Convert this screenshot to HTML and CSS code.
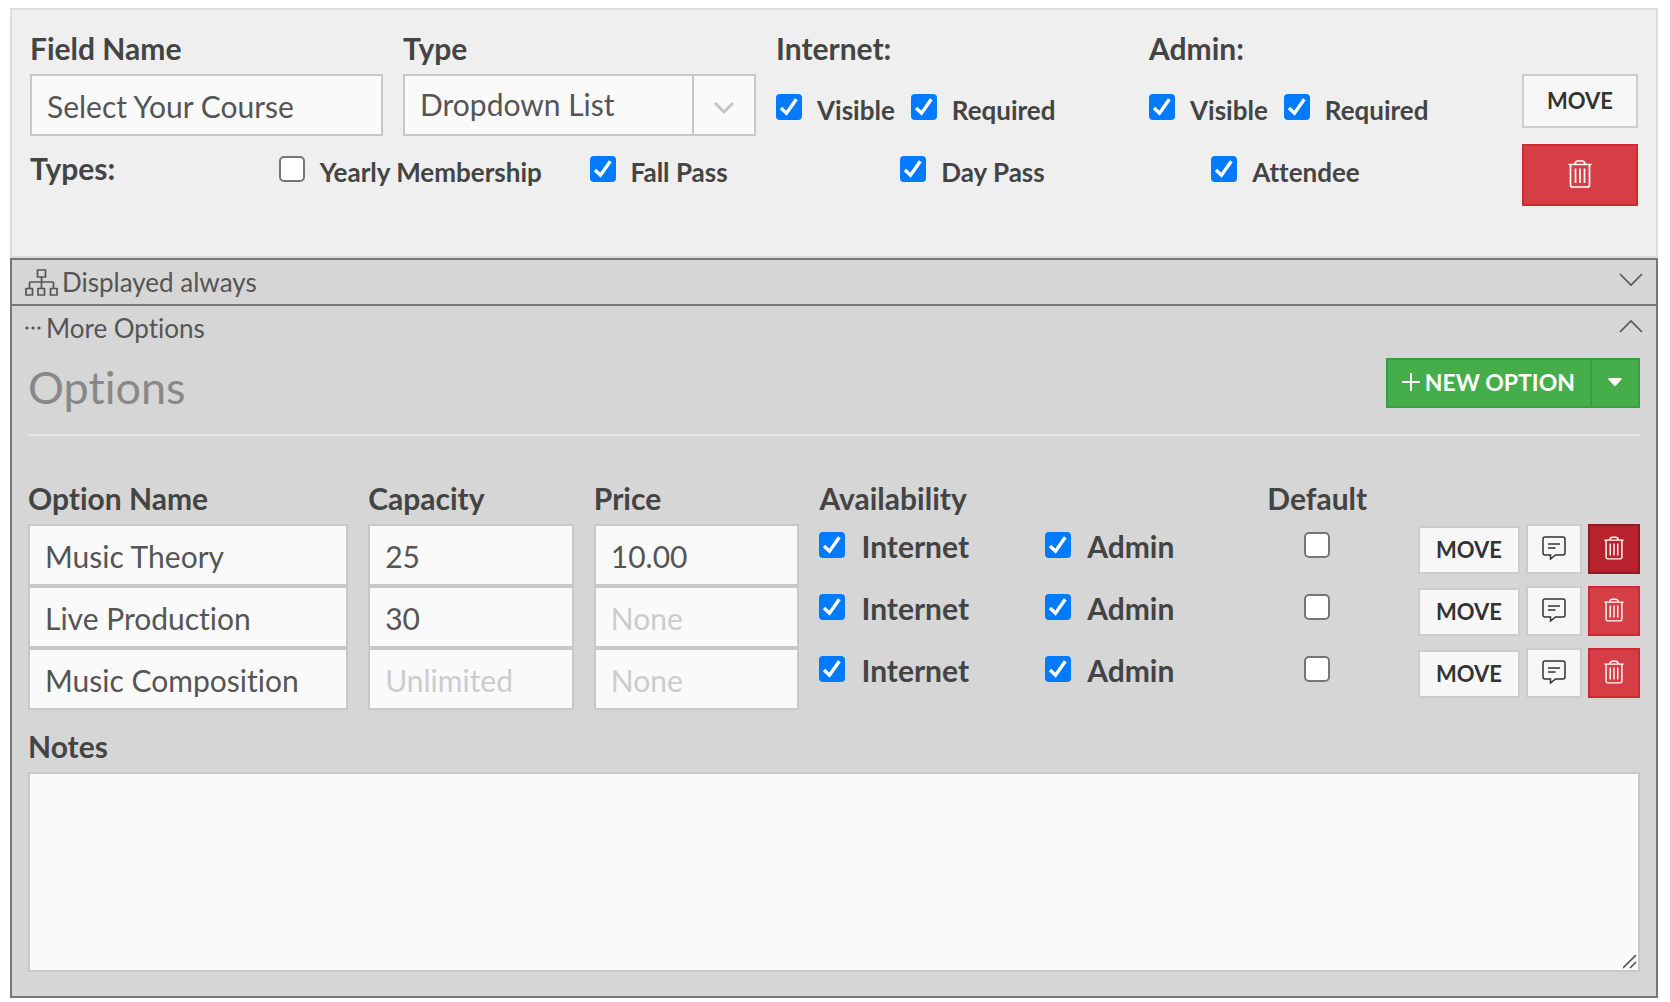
FILE: index.html
```
<!DOCTYPE html>
<html lang="en">
<head>
    <meta charset="UTF-8">
    <meta name="viewport" content="width=device-width, initial-scale=1.0">
    <title>Field Settings</title>
    <link rel="stylesheet" href="styles.css">
</head>
<body>
    <!-- shared icons -->
    <svg class="sprite" width="0" height="0" aria-hidden="true">
        <symbol id="trash" viewBox="0 0 24 28">
            <path d="M0.5 4.5H23.5M7 4.5C7 2.5 8 1 10 1H14C16 1 17 2.5 17 4.5M2.5 4.5V25Q2.5 27 4.5 27H19.5Q21.5 27 21.5 25V4.5M7.5 8.5V23M12 8.5V23M16.5 8.5V23" fill="none" stroke="currentColor" stroke-width="1.7"/>
        </symbol>
        <symbol id="comment" viewBox="0 0 24 24">
            <path d="M3 1H21Q23 1 23 3V17Q23 19 21 19H13.5L8.5 23V19H3Q1 19 1 17V3Q1 1 3 1Z M6 8H18M6 12H13.5" fill="none" stroke="currentColor" stroke-width="1.5"/>
        </symbol>
    </svg>

    <section class="field-panel">
        <div class="field-main">
            <div class="field-row">
                <div class="field-col">
                    <label class="title" for="fieldName">Field Name</label>
                    <input class="text-input" type="text" id="fieldName" value="Select Your Course">
                </div>
                <div class="field-col">
                    <label class="title" for="fieldType">Type</label>
                    <select class="select-input" id="fieldType">
                        <option>Dropdown List</option>
                    </select>
                </div>
                <div class="field-col">
                    <span class="title">Internet:</span>
                    <div class="checks">
                        <label class="check"><input type="checkbox" checked><span>Visible</span></label>
                        <label class="check"><input type="checkbox" checked><span>Required</span></label>
                    </div>
                </div>
                <div class="field-col">
                    <span class="title">Admin:</span>
                    <div class="checks">
                        <label class="check"><input type="checkbox" checked><span>Visible</span></label>
                        <label class="check"><input type="checkbox" checked><span>Required</span></label>
                    </div>
                </div>
            </div>
            <div class="types-row">
                <span class="title">Types:</span>
                <label class="check"><input type="checkbox"><span>Yearly Membership</span></label>
                <label class="check"><input type="checkbox" checked><span>Fall Pass</span></label>
                <label class="check"><input type="checkbox" checked><span>Day Pass</span></label>
                <label class="check"><input type="checkbox" checked><span>Attendee</span></label>
            </div>
        </div>
        <div class="field-actions">
            <button class="btn move-btn" type="button">MOVE</button>
            <button class="btn delete-btn" type="button" aria-label="Delete field"><svg class="trash-lg"><use href="#trash"/></svg></button>
        </div>
    </section>

    <section class="settings">
        <button class="bar bar-line" type="button">
            <svg class="sitemap" viewBox="0 0 33 27"><path d="M12.5 1H20.5V8H12.5ZM1 19.5H7.5V26H1ZM13 19.5H19.5V26H13ZM25.5 19.5H32V26H25.5ZM16.5 8V19.5M4.5 19.5V14Q4.5 13 5.5 13H27.5Q28.5 13 28.5 14V19.5" fill="none" stroke="currentColor" stroke-width="1.7" stroke-linejoin="round"/></svg>
            <span>Displayed always</span>
            <svg class="chevron" viewBox="0 0 24 14"><path d="M1 1L12 12L23 1" fill="none" stroke="currentColor" stroke-width="1.6"/></svg>
        </button>
        <button class="bar" type="button">
            <svg class="dots" viewBox="0 0 17 4"><circle cx="2" cy="2" r="1.6"/><circle cx="8" cy="2" r="1.6"/><circle cx="14" cy="2" r="1.6"/></svg>
            <span>More Options</span>
            <svg class="chevron" viewBox="0 0 24 14"><path d="M1 13L12 2L23 13" fill="none" stroke="currentColor" stroke-width="1.6"/></svg>
        </button>

        <div class="options">
            <div class="options-head">
                <h2>Options</h2>
                <div class="btn-group">
                    <button class="btn new-btn" type="button"><svg class="plus" viewBox="0 0 18 18"><path d="M9 0V18M0 9H18" stroke="currentColor" stroke-width="2"/></svg>NEW OPTION</button>
                    <button class="btn caret-btn" type="button" aria-label="More ways to add"><svg class="caret" viewBox="0 0 14 8"><path d="M1 0H13Q14 0.5 13.5 1.5L8 7.5Q7 8.3 6 7.5L0.5 1.5Q0 0.5 1 0Z" fill="currentColor"/></svg></button>
                </div>
            </div>

            <table class="options-table">
                <colgroup>
                    <col class="col-name">
                    <col class="col-num">
                    <col class="col-num">
                    <col class="col-num">
                    <col class="col-admin">
                    <col class="col-default">
                    <col>
                </colgroup>
                <thead>
                    <tr>
                        <th>Option Name</th>
                        <th>Capacity</th>
                        <th>Price</th>
                        <th colspan="2">Availability</th>
                        <th class="center">Default</th>
                        <td></td>
                    </tr>
                </thead>
                <tbody>
                    <tr>
                        <td><input class="text-input" type="text" value="Music Theory" aria-label="Option Name"></td>
                        <td><input class="text-input" type="text" value="25" placeholder="Unlimited" aria-label="Capacity"></td>
                        <td><input class="text-input" type="text" value="10.00" placeholder="None" aria-label="Price"></td>
                        <td><label class="check check-lg"><input type="checkbox" checked><span>Internet</span></label></td>
                        <td><label class="check check-lg"><input type="checkbox" checked><span>Admin</span></label></td>
                        <td><label class="check check-lg center"><input type="checkbox" aria-label="Default"></label></td>
                        <td class="last">
                            <div class="row-actions">
                                <button class="btn move-sm" type="button">MOVE</button>
                                <button class="btn comment-btn" type="button" aria-label="Comment"><svg class="comment-icon"><use href="#comment"/></svg></button>
                                <button class="btn delete-sm active" type="button" aria-label="Delete"><svg class="trash-sm"><use href="#trash"/></svg></button>
                            </div>
                        </td>
                    </tr>
                    <tr>
                        <td><input class="text-input" type="text" value="Live Production" aria-label="Option Name"></td>
                        <td><input class="text-input" type="text" value="30" placeholder="Unlimited" aria-label="Capacity"></td>
                        <td><input class="text-input" type="text" placeholder="None" aria-label="Price"></td>
                        <td><label class="check check-lg"><input type="checkbox" checked><span>Internet</span></label></td>
                        <td><label class="check check-lg"><input type="checkbox" checked><span>Admin</span></label></td>
                        <td><label class="check check-lg center"><input type="checkbox" aria-label="Default"></label></td>
                        <td class="last">
                            <div class="row-actions">
                                <button class="btn move-sm" type="button">MOVE</button>
                                <button class="btn comment-btn" type="button" aria-label="Comment"><svg class="comment-icon"><use href="#comment"/></svg></button>
                                <button class="btn delete-sm" type="button" aria-label="Delete"><svg class="trash-sm"><use href="#trash"/></svg></button>
                            </div>
                        </td>
                    </tr>
                    <tr>
                        <td><input class="text-input" type="text" value="Music Composition" aria-label="Option Name"></td>
                        <td><input class="text-input" type="text" placeholder="Unlimited" aria-label="Capacity"></td>
                        <td><input class="text-input" type="text" placeholder="None" aria-label="Price"></td>
                        <td><label class="check check-lg"><input type="checkbox" checked><span>Internet</span></label></td>
                        <td><label class="check check-lg"><input type="checkbox" checked><span>Admin</span></label></td>
                        <td><label class="check check-lg center"><input type="checkbox" aria-label="Default"></label></td>
                        <td class="last">
                            <div class="row-actions">
                                <button class="btn move-sm" type="button">MOVE</button>
                                <button class="btn comment-btn" type="button" aria-label="Comment"><svg class="comment-icon"><use href="#comment"/></svg></button>
                                <button class="btn delete-sm" type="button" aria-label="Delete"><svg class="trash-sm"><use href="#trash"/></svg></button>
                            </div>
                        </td>
                    </tr>
                </tbody>
            </table>

            <label class="title notes-label" for="notes">Notes</label>
            <textarea class="notes" id="notes"></textarea>
        </div>
    </section>
</body>
</html>
```

FILE: styles.css
```
* {
    box-sizing: border-box;
}
body {
    margin: 0;
    padding: 8px 12px 0 10px;
    background-color: white;
    color: #555;
    font-family: Lato, sans-serif;
    font-size: 30px;
    font-variant-ligatures: none;
}
button, input, select, textarea {
    font-family: inherit;
    font-variant-ligatures: inherit;
    margin: 0;
}
svg {
    display: block;
    flex: none;
}
.sprite {
    position: absolute;
}
.title {
    display: block;
    height: 46px;
    line-height: 40px;
    font-size: 30px;
    font-weight: bold;
    color: #444;
}

/* field panel */
.field-panel {
    display: flex;
    height: 250px;
    padding: 18px;
    background-color: #efefef;
    border: 2px solid #dcdcdc;
}
.field-main {
    flex: 1;
}
.field-row {
    display: grid;
    grid-template-columns: repeat(4, 1fr);
}
.field-col {
    padding-right: 20px;
}
.text-input, .select-input {
    display: block;
    width: 100%;
    height: 62px;
    padding: 2px 15px 0;
    border: 2px solid #c8c8c8;
    border-radius: 0;
    background-color: #fafafa;
    color: #555;
    font-size: 30px;
    outline: none;
}
.select-input {
    appearance: none;
    padding: 0 80px 2px 15px;
    background-image: url("data:image/svg+xml,%3Csvg xmlns='http://www.w3.org/2000/svg' width='62' height='58'%3E%3Cpath d='M1 0V58' stroke='%23c8c8c8' stroke-width='2'/%3E%3Cpath d='M23 27L32 36L41 27' fill='none' stroke='%23c4c4c4' stroke-width='3'/%3E%3C/svg%3E");
    background-repeat: no-repeat;
    background-position: right center;
}
.text-input::placeholder {
    color: #ccc;
}
.checks {
    display: flex;
    gap: 16px;
    padding-top: 20px;
}
.check {
    display: flex;
    gap: 15px;
    color: #444;
    font-size: 26px;
    font-weight: bold;
    line-height: 32px;
}
.check input {
    appearance: none;
    flex: none;
    width: 26px;
    height: 26px;
    border: 2px solid #767676;
    border-radius: 5px;
    background-color: white;
}
.check input:checked {
    border: none;
    border-radius: 4px;
    background: #007aff url("data:image/svg+xml,%3Csvg xmlns='http://www.w3.org/2000/svg' viewBox='0 0 26 26'%3E%3Cpath d='M5 14L10.5 19.2L20.3 5.2' fill='none' stroke='white' stroke-width='3.4'/%3E%3C/svg%3E") center / 26px;
}
.types-row {
    display: grid;
    grid-template-columns: 4fr repeat(4, 5fr);
    padding-top: 12px;
}
.types-row .check {
    padding-top: 8px;
}
.field-actions {
    display: flex;
    flex-direction: column;
    gap: 16px;
    width: 116px;
    padding-top: 46px;
}

/* buttons */
.btn {
    display: flex;
    align-items: center;
    justify-content: center;
    padding: 0 0 2px;
    border: 2px solid #ccc;
    background-color: #f7f7f7;
    color: #333;
    font-size: 22px;
    font-weight: bold;
    cursor: pointer;
}
.move-btn {
    height: 54px;
}
.delete-btn {
    height: 62px;
}
.delete-btn, .delete-sm {
    background-color: #d53e45;
    border-color: #cf2734;
    color: white;
}
.trash-lg {
    width: 24px;
    height: 28px;
}

/* settings */
.settings {
    background-color: #d6d6d6;
    border: 2px solid #777;
}
.bar {
    display: flex;
    align-items: center;
    width: 100%;
    height: 44px;
    padding: 0 13px;
    border: none;
    background: none;
    color: #555;
    font-size: 26px;
    text-align: left;
    cursor: pointer;
}
.bar-line {
    height: 46px;
    border-bottom: 2px solid #777;
}
.bar span {
    flex: 1;
}
.sitemap {
    width: 33px;
    height: 27px;
    margin-right: 4px;
}
.dots {
    width: 17px;
    height: 4px;
    margin-right: 4px;
    fill: #555;
}
.chevron {
    width: 24px;
    height: 14px;
    margin-bottom: 4px;
}
.options {
    padding: 8px 16px 24px;
}
.options-head {
    display: flex;
    justify-content: space-between;
    height: 78px;
    border-bottom: 2px solid #e5e5e5;
}
.options-head h2 {
    margin: 0;
    color: #888;
    font-size: 45px;
    font-weight: normal;
    line-height: 58px;
}
.btn-group {
    display: flex;
}
.new-btn, .caret-btn {
    height: 50px;
    background-color: #45ae4a;
    border-color: #3d9c40;
    color: white;
}
.new-btn {
    gap: 5px;
    padding: 0 15px 2px 14px;
    border-right: none;
    font-size: 23px;
}
.caret-btn {
    width: 50px;
}
.plus {
    width: 18px;
    height: 18px;
}
.caret {
    width: 14px;
    height: 8px;
}
.options-table {
    width: 100%;
    margin-top: 42px;
    border-collapse: collapse;
    table-layout: fixed;
}
.col-name {
    width: 21.1%;
}
.col-num {
    width: 14%;
}
.col-admin {
    width: 13%;
}
.col-default {
    width: 9%;
}
.options-table th {
    height: 46px;
    padding: 0;
    color: #444;
    font-size: 30px;
    line-height: 40px;
    text-align: left;
    vertical-align: top;
}
.options-table th.center {
    padding-right: 20px;
    text-align: center;
}
.options-table td {
    padding: 0 20px 0 0;
    vertical-align: top;
}
.options-table td.last {
    padding-right: 0;
}
.check-lg {
    gap: 16px;
    padding-top: 8px;
    font-size: 30px;
    line-height: 28px;
}
.check.center {
    justify-content: center;
}
.row-actions {
    display: flex;
    justify-content: flex-end;
    align-items: flex-end;
    gap: 6px;
}
.move-sm {
    width: 102px;
    height: 48px;
}
.comment-btn {
    width: 56px;
    height: 50px;
}
.delete-sm {
    width: 52px;
    height: 50px;
}
.delete-sm.active {
    background-color: #b9222d;
    border-color: #8e1b24;
}
.comment-icon {
    width: 24px;
    height: 24px;
}
.trash-sm {
    width: 20px;
    height: 24px;
}
.notes-label {
    padding-top: 16px;
    height: 62px;
}
.notes {
    display: block;
    width: 100%;
    height: 200px;
    padding: 10px 15px;
    border: 2px solid #c8c8c8;
    background-color: #fafafa;
    color: #555;
    font-size: 30px;
    resize: vertical;
    outline: none;
}
.notes::-webkit-resizer {
    background: url("data:image/svg+xml,%3Csvg xmlns='http://www.w3.org/2000/svg' width='15' height='15'%3E%3Cpath d='M0 13L13 0M7 13L13 7' stroke='%23555' stroke-width='1.7'/%3E%3C/svg%3E") no-repeat;
}
```
